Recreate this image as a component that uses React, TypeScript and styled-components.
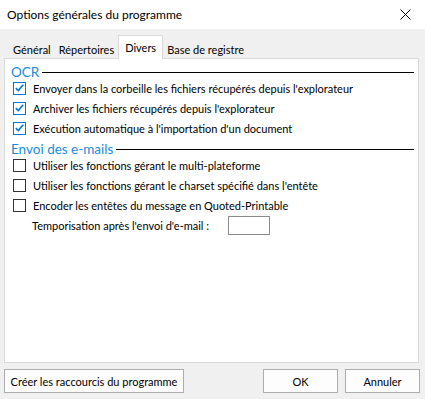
import styled, { createGlobalStyle } from "styled-components";

const Global = createGlobalStyle`
  body {
    margin: 0;
    background: #f0f0f0;
    font-family: Lato, "Noto Sans", sans-serif;
    font-size: 11px;
    color: #000;
  }
`;

const Window = styled.div`
  width: 425px;
  height: 399px;
  display: flex;
  flex-direction: column;
  background: #f0f0f0;
  overflow: hidden;
  white-space: nowrap;
`;

const TitleBar = styled.div`
  height: 29px;
  background: #fff;
  display: flex;
  align-items: center;
  justify-content: space-between;
  padding: 0 14px 0 7px;
  font-size: 12px;
`;

const Close = styled.svg`
  width: 11px;
  height: 11px;
`;

const Tabs = styled.div`
  display: flex;
  align-items: flex-end;
  height: 24px;
  margin: 6px 0 -1px;
  padding-left: 9px;
  position: relative;
  z-index: 1;
`;

const Tab = styled.div<{ $active?: boolean }>`
  height: ${(p) => (p.$active ? "24px" : "20px")};
  padding: 0 ${(p) => (p.$active ? "6px" : "3px")};
  display: flex;
  align-items: center;
  background: ${(p) => (p.$active ? "#fff" : "transparent")};
  border: 1px solid ${(p) => (p.$active ? "#d9d9d9" : "transparent")};
  border-bottom: none;
  box-sizing: border-box;
`;

const Pane = styled.div`
  margin: 0 6px 0 4px;
  height: 305px;
  box-sizing: border-box;
  background: #fff;
  border: 1px solid #d9d9d9;
  padding: 7px 4px 0 6px;
  display: flex;
  flex-direction: column;
`;

const Heading = styled.div<{ $gap?: number }>`
  display: flex;
  align-items: center;
  gap: 3px;
  height: 12px;
  line-height: 12px;
  margin-top: ${(p) => p.$gap ?? 0}px;
  color: #1a8ae0;
  font-size: 13.5px;
  &::after {
    content: "";
    flex: 1;
    height: 1px;
    background: #000;
  }
`;

const Row = styled.label`
  display: flex;
  align-items: center;
  height: 20px;
  padding-left: 2px;
  gap: 7px;
`;

const Box = styled.span<{ $checked?: boolean }>`
  width: 13px;
  height: 13px;
  flex: none;
  box-sizing: border-box;
  border: 1px solid ${(p) => (p.$checked ? "#0078d7" : "#333")};
  background: #fff;
  display: flex;
  align-items: center;
  justify-content: center;
`;

const FieldRow = styled.div`
  display: flex;
  align-items: center;
  height: 21px;
  padding-left: 21px;
`;

const FieldLabel = styled.span`
  width: 196px;
`;

const Input = styled.div`
  width: 42px;
  height: 19px;
  box-sizing: border-box;
  border: 1px solid #8a8a8a;
  background: #fff;
`;

const Footer = styled.div`
  display: flex;
  align-items: center;
  padding: 6px 5px 0 4px;
  gap: 7px;
`;

const Button = styled.div<{ $w: number }>`
  width: ${(p) => p.$w}px;
  height: 24px;
  box-sizing: border-box;
  border: 1px solid #adadad;
  background: #fdfdfd;
  display: flex;
  align-items: center;
  justify-content: center;
`;

const Spacer = styled.div`
  flex: 1;
`;

const Check = () => (
  <svg width="9" height="8" viewBox="0 0 9 8">
    <path d="M0.8 4.2 L3.3 6.6 L8.2 0.8" fill="none" stroke="#0078d7" strokeWidth="1.6" />
  </svg>
);

const ocr = [
  "Envoyer dans la corbeille les fichiers récupérés depuis l'explorateur",
  "Archiver les fichiers récupérés depuis l'explorateur",
  "Exécution automatique à l'importation d'un document",
];

const mails = [
  "Utiliser les fonctions gérant le multi-plateforme",
  "Utiliser les fonctions gérant le charset spécifié dans l'entête",
  "Encoder les entêtes du message en Quoted-Printable",
];

export default function App() {
  return (
    <Window>
      <Global />
      <TitleBar>
        <span>Options générales du programme</span>
        <Close viewBox="0 0 11 11">
          <path d="M0.5 0.5 L10.5 10.5 M10.5 0.5 L0.5 10.5" stroke="#000" strokeWidth="1" />
        </Close>
      </TitleBar>
      <Tabs>
        <Tab>Général</Tab>
        <Tab>Répertoires</Tab>
        <Tab $active>Divers</Tab>
        <Tab>Base de registre</Tab>
      </Tabs>
      <Pane>
        <Heading>OCR</Heading>
        {ocr.map((t) => (
          <Row key={t}>
            <Box $checked>
              <Check />
            </Box>
            {t}
          </Row>
        ))}
        <Heading $gap={5}>Envoi des e-mails</Heading>
        {mails.map((t) => (
          <Row key={t}>
            <Box />
            {t}
          </Row>
        ))}
        <FieldRow>
          <FieldLabel>Temporisation après l'envoi d'e-mail :</FieldLabel>
          <Input />
        </FieldRow>
      </Pane>
      <Footer>
        <Button $w={180}>Créer les raccourcis du programme</Button>
        <Spacer />
        <Button $w={75}>OK</Button>
        <Button $w={75}>Annuler</Button>
      </Footer>
    </Window>
  );
}
